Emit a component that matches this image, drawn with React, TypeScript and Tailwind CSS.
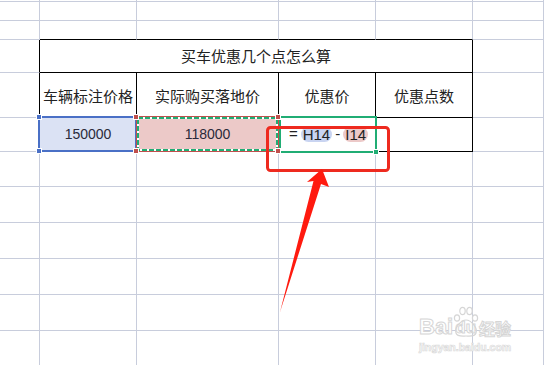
import React from "react";

const ROWS = 12;
const COLS = 6;

function DashedMarquee() {
  return (
    <svg className="absolute inset-0 h-full w-full" preserveAspectRatio="none">
      <rect x="1" y="1" width="calc(100% - 2px)" height="calc(100% - 2px)" fill="none" stroke="#ffffff" strokeWidth="2" />
      <rect x="1" y="1" width="calc(100% - 2px)" height="calc(100% - 2px)" fill="none" stroke="#20ad74" strokeWidth="2" strokeDasharray="5 2" />
    </svg>
  );
}

function Sq({ cls }: { cls: string }) {
  return <div className={"absolute h-[6px] w-[6px] border border-white " + cls} />;
}

function Cell({ r, c }: { r: number; c: number }) {
  const gray = "border-r border-b border-[#c8cddc]";
  if (r === 2 && c >= 1 && c <= 4) {
    return <div className="border-r border-b border-r-[#c8cddc] border-b-black" />;
  }
  if (r >= 3 && r <= 5 && c === 0) {
    return <div className="border-r border-b border-r-black border-b-[#c8cddc]" />;
  }
  if (r === 3 && c === 1) {
    return (
      <div className="col-span-4 flex items-center justify-center border-r border-b border-black text-[15px] text-[#222]">
        买车优惠几个点怎么算
      </div>
    );
  }
  if (r === 3 && c >= 2 && c <= 4) return null;
  if (r === 4 && c >= 1 && c <= 4) {
    const labels = ["车辆标注价格", "实际购买落地价", "优惠价", "优惠点数"];
    return (
      <div className="flex items-center justify-center border-r border-b border-black pt-[3px] text-[15px] text-[#222]">
        {labels[c - 1]}
      </div>
    );
  }
  if (r === 5 && c === 1) {
    return (
      <div className="relative flex items-center justify-center border-r border-b border-black bg-[#dbe2f4] font-['Liberation_Sans',sans-serif] text-[14px] text-[#2a2a3a]">
        150000
        <div className="absolute -top-[2px] -right-[1px] -bottom-[1px] -left-[2px] border-2 border-[#4a70c6]" />
        <Sq cls="-top-[4px] -left-[4px] bg-[#4a70c6]" />
        <Sq cls="-bottom-[3px] -left-[4px] bg-[#4a70c6]" />
      </div>
    );
  }
  if (r === 5 && c === 2) {
    return (
      <div className="relative flex items-center justify-center border-r border-b border-black bg-[#ecc9c8] font-['Liberation_Sans',sans-serif] text-[14px] text-[#2a2a3a]">
        118000
        <div className="absolute -top-[2px] -right-[1px] -bottom-[1px] -left-[1px] border border-[#c0504d]">
          <DashedMarquee />
        </div>
        <Sq cls="-top-[4px] -left-[4px] bg-[#c0504d]" />
        <Sq cls="-bottom-[3px] -left-[4px] bg-[#c0504d]" />
        <Sq cls="-top-[4px] -right-[3px] bg-[#c0504d]" />
        <Sq cls="-bottom-[3px] -right-[3px] bg-[#c0504d]" />
      </div>
    );
  }
  if (r === 5 && c === 3) {
    return (
      <div className="relative flex items-center justify-center border-r border-b border-black pl-[3px] font-['Liberation_Sans',sans-serif] text-[15px] text-[#222]">
        <span className="mr-[3px]">=</span>
        <span className="rounded-full bg-[#c9d4f1] px-[2px] leading-[15px]">H14</span>
        <span className="mx-[3px]">-</span>
        <span className="rounded-full bg-[#ecc9c8] px-[2px] leading-[15px]">I14</span>
        <div className="absolute -top-[2px] -right-[2px] -bottom-[2px] left-[0px] border-2 border-[#20ad74]" />
        <Sq cls="-bottom-[4px] -right-[4px] bg-[#20ad74]" />
        <Sq cls="-top-[4px] -left-[4px] bg-[#c0504d]" />
        <Sq cls="-bottom-[3px] -left-[4px] bg-[#c0504d]" />
      </div>
    );
  }
  if (r === 5 && c === 4) {
    return <div className="border-r border-b border-black" />;
  }
  return <div className={gray} />;
}

export default function App() {
  const cells: React.ReactNode[] = [];
  for (let r = 0; r < ROWS; r++) {
    for (let c = 0; c < COLS; c++) {
      cells.push(<Cell key={r + "-" + c} r={r} c={c} />);
    }
  }
  return (
    <div className="relative h-[365px] w-[544px] overflow-hidden bg-white font-['Noto_Sans_CJK_SC',sans-serif]">
      <div className="grid grid-cols-[40px_97px_142px_97px_97px_1fr] grid-rows-[2px_19px_19px_33px_45px_34px_35px_36px_36px_36px_36px_35px]">
        {cells}
      </div>

      <svg className="pointer-events-none absolute left-0 top-0" width="544" height="365" viewBox="0 0 544 365">
        <rect x="267.5" y="127.5" width="121" height="43" rx="3" fill="none" stroke="#ee2a1f" strokeWidth="3" />
        <polygon points="322,169 307,182 313.5,181 280,312 321,184 329,187" fill="#ff1a0f" />
      </svg>

      <div className="pointer-events-none absolute left-[419px] top-[316px] flex flex-col items-start text-white">
        <div className="flex items-end">
          <span className="font-['Liberation_Sans',sans-serif] text-[22px] font-bold leading-[22px] [-webkit-text-stroke:1px_#d6d6d6]">Bai</span>
          <span className="relative ml-[2px] font-['Liberation_Sans',sans-serif] text-[17px] font-bold leading-[20px] [-webkit-text-stroke:1px_#d6d6d6]">
            du
            <svg className="absolute -top-[12px] -left-[2px]" width="26" height="32" viewBox="0 0 26 32">
              <g fill="none" stroke="#d6d6d6" strokeWidth="1.2">
                <ellipse cx="4" cy="12" rx="2.6" ry="3.2" />
                <ellipse cx="9.5" cy="5" rx="2.7" ry="3.6" />
                <ellipse cx="16.5" cy="5" rx="2.7" ry="3.6" />
                <ellipse cx="22" cy="12" rx="2.6" ry="3.2" />
                <path d="M3 27 C1 22 8 14 13 14 C18 14 25 22 23 27 C22 31 16 30 13 30 C10 30 4 31 3 27 Z" />
              </g>
            </svg>
          </span>
          <span className="ml-[3px] text-[16px] font-bold leading-[20px] [-webkit-text-stroke:1px_#d6d6d6]">经验</span>
        </div>
        <span className="mt-[4px] font-['Liberation_Sans',sans-serif] text-[10.5px] font-bold leading-[11px] [-webkit-text-stroke:0.7px_#dadada]">
          jingyan.baidu.com
        </span>
      </div>
    </div>
  );
}
